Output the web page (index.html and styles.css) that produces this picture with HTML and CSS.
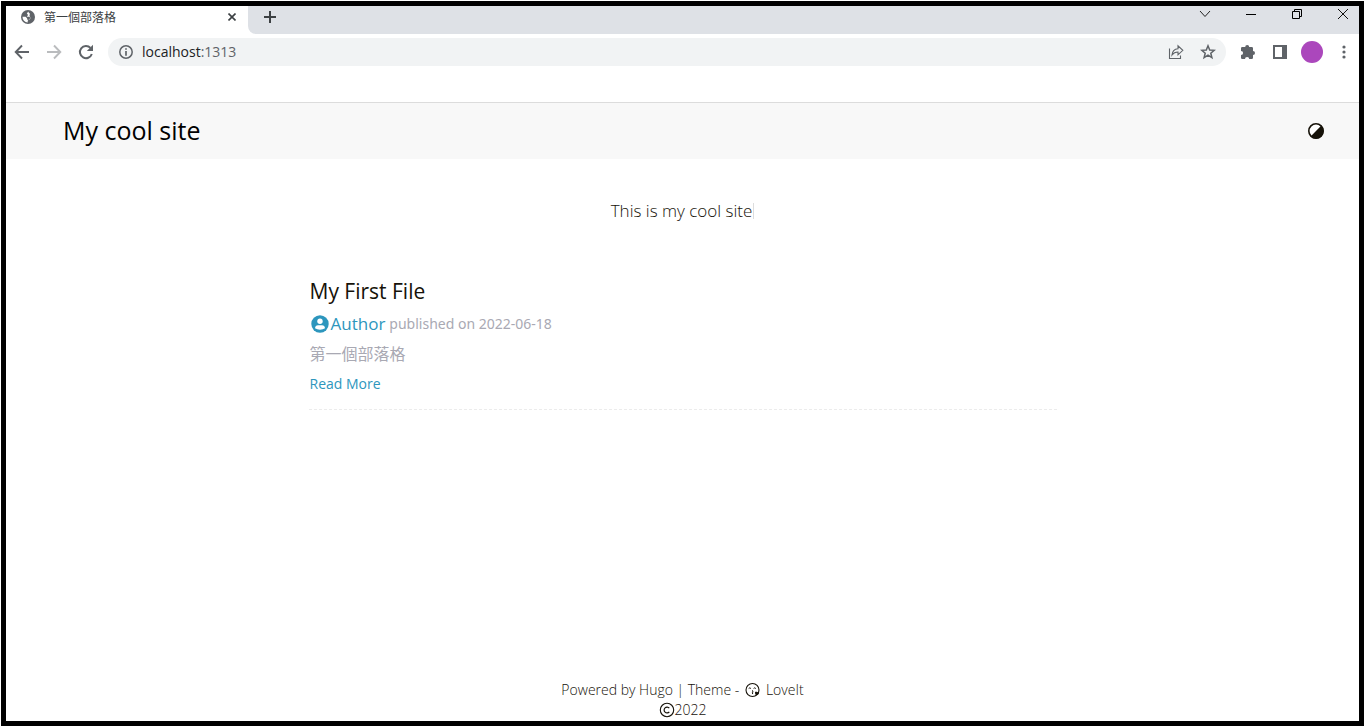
FILE: index.html
```html
<!DOCTYPE html>
<html lang="zh-Hant">
<head>
<meta charset="utf-8">
<meta name="viewport" content="width=device-width, initial-scale=1">
<title>第一個部落格</title>
<link rel="stylesheet" href="styles.css">
</head>
<body>
<div class="window">
  <div class="tab-strip">
    <div class="tab">
      <svg class="favicon" width="14" height="14" viewBox="0 0 14 14"><circle cx="7" cy="7" r="7" fill="#5f6368"/><path d="M7.6 1.400 5.800 3.300 7 5.100 5.800 6.800H8.500L9.600 8.200 8.800 9.400 7.500 9.600 6.700 11V12.500A5.600 5.600 0 0 1 1.500 6.800H4.600L6.100 8.200 6.300 9.800 7.900 9.600 9.600 8.100 8.800 6.500 8.500 5.300 9 3.700 7.600 2.600Z" fill="#fff"/></svg>
      <span class="tab-title">第一個部落格</span>
      <button class="icon-button tab-close" aria-label="Close tab"><svg width="8" height="8" viewBox="0 0 8 8"><path d="M.5.5 7.5 7.5M7.5.5.5 7.5" stroke="#3c4043" stroke-width="1.6"/></svg></button>
    </div>
    <div class="strip">
      <button class="icon-button new-tab" aria-label="New tab"><svg width="12" height="12" viewBox="0 0 12 12"><path d="M6 0V12M0 6H12" stroke="#3c4043" stroke-width="2"/></svg></button>
      <div class="window-controls">
        <button class="icon-button" aria-label="Search tabs"><svg width="12" height="12" viewBox="0 0 12 12"><path d="M1 3 6 8.5 11 3" fill="none" stroke="#222" stroke-width="1"/></svg></button>
        <button class="icon-button" aria-label="Minimize"><svg width="12" height="12" viewBox="0 0 12 12"><path d="M1 6.500H11" stroke="#000"/></svg></button>
        <button class="icon-button" aria-label="Restore"><svg width="12" height="12" viewBox="0 0 12 12"><path d="M1.500 3.500H8.500V10.500H1.500ZM3.500 3.500V1.500H10.500V8.500H8.500" fill="none" stroke="#000"/></svg></button>
        <button class="icon-button" aria-label="Close"><svg width="12" height="12" viewBox="0 0 12 12"><path d="M1 1 11 11M11 1 1 11" stroke="#111"/></svg></button>
      </div>
    </div>
  </div>

  <div class="toolbar">
    <div class="nav">
      <button class="icon-button" aria-label="Back"><svg width="16" height="16" viewBox="0 0 16 16"><path d="M15 8H2M8 1.500 1.700 8 8 14.500" fill="none" stroke="#5f6368" stroke-width="1.900"/></svg></button>
      <button class="icon-button" aria-label="Forward"><svg width="16" height="16" viewBox="0 0 16 16"><path d="M1 8H14M8 1.500 14.300 8 8 14.500" fill="none" stroke="#babcbe" stroke-width="1.900"/></svg></button>
      <button class="icon-button" aria-label="Reload"><svg width="16" height="16" viewBox="0 0 16 16"><path d="M13.800 10A6.100 6.100 0 1 1 12.500 3.900" fill="none" stroke="#5f6368" stroke-width="2"/><path d="M15 .8V7H8.800Z" fill="#5f6368"/></svg></button>
    </div>
    <div class="address">
      <svg width="14" height="14" viewBox="0 0 14 14"><circle cx="7" cy="7" r="6.200" fill="none" stroke="#5f6368" stroke-width="1.500"/><path d="M7 3.200V4.800M7 6V10.800" stroke="#5f6368" stroke-width="1.700"/></svg>
      <span class="url">localhost<span class="port">:1313</span></span>
      <button class="icon-button share" aria-label="Share"><svg width="16" height="16" viewBox="0 0 16 16"><path d="M1.500 4.500V14.500H12.500V11.500M4 11C4.300 7 6.500 5 10 4.700V1.800L14.800 6.300 10 10.800V8C7.200 8 5.400 9 4 11Z" fill="none" stroke="#5f6368" stroke-width="1.100"/></svg></button>
      <button class="icon-button" aria-label="Bookmark"><svg width="16" height="16" viewBox="0 0 16 16"><path d="M8 1.800 9.700 6 14.200 6.300 10.800 9.200 11.900 13.600 8 11.200 4.100 13.600 5.200 9.200 1.800 6.300 6.300 6Z" fill="none" stroke="#5f6368" stroke-width="1.500"/></svg></button>
    </div>
    <div class="tools">
      <button class="icon-button" aria-label="Extensions"><svg width="16" height="16" viewBox="0 0 16 16"><path d="M1 4.300Q1 3 2.300 3H5.200A2 2 0 1 1 9.200 3H11.800Q13 3 13 4.300V7A2 2 0 1 1 13 11V13.700Q13 15 11.700 15H9.200A2.100 2.100 0 0 0 5 15H2.300Q1 15 1 13.700V11.100A2.100 2.100 0 0 0 1 6.900Z" fill="#5f6368"/></svg></button>
      <button class="icon-button" aria-label="Side panel"><svg width="16" height="16" viewBox="0 0 16 16"><path d="M1 1H15V15H1ZM3 3V13H10V3Z" fill="#5f6368" fill-rule="evenodd"/></svg></button>
      <button class="icon-button avatar" aria-label="Profile"></button>
      <button class="icon-button" aria-label="Menu"><svg width="16" height="16" viewBox="0 0 16 16"><g fill="#5f6368"><circle cx="8" cy="3" r="1.600"/><circle cx="8" cy="8" r="1.600"/><circle cx="8" cy="13" r="1.600"/></g></svg></button>
    </div>
  </div>

  <header class="site-header">
    <a class="brand" href="#">My cool site</a>
    <button class="icon-button" aria-label="Switch theme"><svg width="16" height="16" viewBox="0 0 16 16"><circle cx="8" cy="8" r="7.200" fill="#fff" stroke="#161209" stroke-width="1.600"/><path d="M13.400 2.600A7.600 7.600 0 0 1 2.600 13.400Z" fill="#161209"/></svg></button>
  </header>

  <main class="content">
    <p class="subtitle">This is my cool site<span class="cursor"></span></p>
    <article class="post">
      <h1 class="post-title"><a href="#">My First File</a></h1>
      <div class="meta">
        <a class="author" href="#"><svg width="18" height="18" viewBox="0 0 18 18"><circle cx="9" cy="9" r="8.700" fill="#2d96bd"/><circle cx="9" cy="6.300" r="2.700" fill="#fff"/><path d="M4 13.300Q4.300 10.300 7 10.300H11Q13.700 10.300 14 13.300Q12 14.700 9 14.700T4 13.300Z" fill="#fff"/></svg>Author</a>
        <span class="published">published on <time datetime="2022-06-18">2022-06-18</time></span>
      </div>
      <p class="summary">第一個部落格</p>
      <a class="more" href="#">Read More</a>
    </article>
  </main>

  <footer class="site-footer">
    <div class="footer-line">Powered by <a href="#">Hugo</a> | Theme - <a class="theme" href="#"><svg width="16" height="16" viewBox="0 0 16 16"><circle cx="7.500" cy="8" r="6.500" fill="none" stroke="#161209" stroke-width="1.100"/><path d="M3.700 6.500Q4.800 5.200 5.900 6.500M8.600 6.500Q9.700 5.200 10.800 6.500M7 8.500Q9 9 7.300 10.200Q9 11 7 12" fill="none" stroke="#161209"/><path d="M10 10.200Q11.200 9 12 10.300Q13.800 9.600 14 11.200Q13.900 12.500 11 13.500Q9.800 11.500 10 10.200Z" fill="#161209"/></svg>LoveIt</a></div>
    <div class="footer-line"><svg width="16" height="16" viewBox="0 0 16 16"><circle cx="8" cy="8" r="6.700" fill="none" stroke="#161209" stroke-width="1.100"/><path d="M10.300 6.200A2.900 2.900 0 1 0 10.300 9.800" fill="none" stroke="#161209" stroke-width="1.200"/></svg>2022</div>
  </footer>
</div>
</body>
</html>
```
FILE: styles.css
```css
* {
  box-sizing: border-box;
}

body {
  margin: 0;
  padding: 1px 2px 2px 1px;
  background: #fff;
  color: #161209;
  font-family: "Open Sans", "Noto Sans CJK TC", sans-serif;
  font-size: 14px;
}

a {
  color: inherit;
  text-decoration: none;
}

h1,
p {
  margin: 0;
}

svg {
  display: block;
  flex: none;
}

.window {
  display: flex;
  flex-direction: column;
  min-height: calc(100vh - 3px);
  border: 5px solid #000;
}

.icon-button {
  display: flex;
  align-items: center;
  justify-content: center;
  flex: none;
  padding: 0;
  border: 0;
  background: none;
}

.tab-strip {
  display: flex;
  height: 28px;
}

.tab {
  display: flex;
  align-items: center;
  width: 242px;
  padding: 0 12px 6px 15px;
}

.tab-title {
  flex: 1;
  margin-left: 9px;
  padding-top: 2px;
  color: #3c4043;
  font-size: 12px;
  line-height: 20px;
}

.strip {
  display: flex;
  flex: 1;
  justify-content: space-between;
  padding: 0 10px 0 16px;
  border-bottom-left-radius: 8px;
  background: #dee1e6;
}

.new-tab {
  height: 22px;
}

.window-controls {
  display: flex;
  gap: 34px;
  height: 16px;
}

.toolbar {
  display: flex;
  align-items: flex-start;
  height: 69px;
  padding: 4px 7px 0 8px;
  border-bottom: 1px solid #dcdcdc;
}

.nav {
  display: flex;
  align-items: center;
  gap: 16px;
  height: 28px;
}

.address {
  display: flex;
  flex: 1;
  align-items: center;
  height: 28px;
  margin-left: 14px;
  padding: 0 10px 0 11px;
  border-radius: 14px;
  background: #f1f3f4;
}

.url {
  flex: 1;
  margin-left: 9px;
  padding-bottom: 2px;
  color: #202124;
}

.port {
  color: #5f6368;
}

.share {
  margin-right: 16px;
}

.tools {
  display: flex;
  align-items: center;
  gap: 13px;
  height: 28px;
  margin-left: 14px;
}

.tools .icon-button:first-child {
  margin-right: 3px;
}

.avatar {
  width: 22px;
  height: 22px;
  border-radius: 50%;
  background: #ab47bc;
}

.site-header {
  display: flex;
  align-items: center;
  justify-content: space-between;
  height: 56px;
  padding: 0 35px 0 57px;
  background: #f8f8f8;
}

.brand {
  padding-bottom: 2px;
  color: #000;
  font-size: 25px;
}

.content {
  flex: 1;
  width: 100%;
  max-width: 748px;
  margin: 0 auto;
}

.subtitle {
  display: flex;
  align-items: center;
  justify-content: center;
  margin-top: 40px;
  font-size: 17px;
  font-weight: 300;
  line-height: 24px;
}

.cursor {
  width: 1px;
  height: 16px;
  margin-left: 1px;
  background: #ddd;
}

.post {
  margin-top: 52px;
  padding: 0 0 10px 1px;
  border-bottom: 1px dashed #ececec;
}

.post-title {
  font-size: 21px;
  font-weight: 400;
  line-height: 32px;
}

.meta {
  display: flex;
  align-items: center;
  gap: 4px;
  margin-top: 2px;
  color: #a9a9b3;
  line-height: 30px;
}

.author {
  display: flex;
  align-items: center;
  gap: 2px;
  padding-left: 1px;
  color: #2d96bd;
  font-size: 17px;
}

.published {
  font-family: "Noto Sans", sans-serif;
}

.summary {
  color: #a9a9b3;
  font-size: 16px;
  line-height: 30px;
}

.more {
  display: block;
  color: #2d96bd;
  line-height: 30px;
}

.site-footer {
  padding-bottom: 1px;
  font-weight: 300;
  line-height: 20px;
}

.footer-line {
  display: flex;
  align-items: center;
  justify-content: center;
  white-space: pre;
}

.footer-line a {
  display: flex;
  align-items: center;
}

.theme {
  gap: 5px;
  padding-left: 2px;
}
```
